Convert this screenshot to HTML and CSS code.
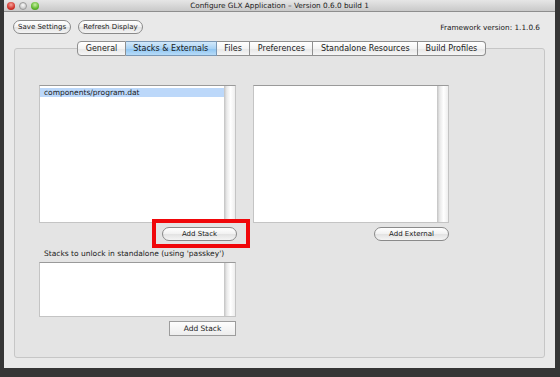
FILE: index.html
```html
<!DOCTYPE html>
<html lang="en">

<head>
  <meta charset="UTF-8">
  <title>Configure GLX Application</title>
  <link rel="stylesheet" href="styles.css">
</head>

<body>
  <div class="window">
    <div class="titlebar">
      <div class="lights">
        <span class="light red"></span>
        <span class="light grey"></span>
        <span class="light green"></span>
      </div>
      <div class="title">Configure GLX Application &ndash; Version 0.6.0 build 1</div>
    </div>

    <div class="toolbar">
      <button class="pill">Save Settings</button>
      <button class="pill">Refresh Display</button>
      <span class="version">Framework version: 1.1.0.6</span>
    </div>

    <div class="tabs">
      <span class="tab first">General</span>
      <span class="tab active">Stacks &amp; Externals</span>
      <span class="tab">Files</span>
      <span class="tab">Preferences</span>
      <span class="tab">Standalone Resources</span>
      <span class="tab last">Build Profiles</span>
    </div>

    <div class="panel">
      <div class="columns">
        <div class="column">
          <div class="list tall">
            <div class="rows">
              <div class="row selected">components/program.dat</div>
            </div>
            <div class="scrollbar"></div>
          </div>
          <div class="actions">
            <button class="pill wide highlighted">Add Stack</button>
          </div>
        </div>
        <div class="column">
          <div class="list tall">
            <div class="rows"></div>
            <div class="scrollbar"></div>
          </div>
          <div class="actions">
            <button class="pill wide">Add External</button>
          </div>
        </div>
      </div>

      <div class="unlock">
        <div class="label">Stacks to unlock in standalone (using 'passkey')</div>
        <div class="list short">
          <div class="rows"></div>
          <div class="scrollbar"></div>
        </div>
        <div class="actions">
          <button class="square">Add Stack</button>
        </div>
      </div>
    </div>
  </div>
</body>

</html>
```

FILE: styles.css
```css
body {
  margin: 0;
  background-color: #363636;
  font-family: "DejaVu Sans", sans-serif;
  font-size: 8px;
  color: #1a1a1a;
}

.window {
  width: 551px;
  height: 368px;
  margin-left: 4px;
  background-color: #e9e9e9;
  display: flex;
  flex-direction: column;
}

.titlebar {
  height: 11px;
  background: linear-gradient(#e6e6e6, #c9c9c9);
  border-bottom: 1px solid #8e8e8e;
  display: flex;
  align-items: center;
  position: relative;
}

.lights {
  display: flex;
  gap: 4px;
  padding-left: 3px;
}

.light {
  width: 8px;
  height: 8px;
  border-radius: 50%;
  box-sizing: border-box;
}

.light.red {
  background: radial-gradient(circle at 50% 35%, #f6a39b, #d0322a 60%, #a31e17);
}

.light.grey {
  background: radial-gradient(circle at 50% 35%, #fafafa, #c9c9c9 70%);
  border: 1px solid #9a9a9a;
}

.light.green {
  background: radial-gradient(circle at 50% 35%, #c9eea4, #5db72b 60%, #3f8a19);
}

.title {
  position: absolute;
  left: 0;
  right: 0;
  text-align: center;
  font-size: 7.3px;
  color: #222;
}

.toolbar {
  display: flex;
  align-items: center;
  gap: 7px;
  padding: 8px 15px 0 9px;
}

.pill {
  height: 14px;
  padding: 0 4px;
  border: 1px solid #8a8a8a;
  border-radius: 7px;
  background: linear-gradient(#ffffff, #f1f1f1 50%, #e2e2e2 51%, #f4f4f4);
  font-family: inherit;
  font-size: 7px;
  color: #1a1a1a;
  line-height: 12px;
}

.version {
  margin-left: auto;
  font-size: 7.3px;
}

.tabs {
  display: flex;
  justify-content: center;
  margin-top: 7px;
  padding-left: 4px;
  position: relative;
  z-index: 1;
}

.tab {
  height: 13px;
  line-height: 14px;
  padding: 0 7.5px;
  border: 1px solid #8f8f8f;
  border-left: none;
  background: linear-gradient(#ffffff, #f3f3f3 50%, #e6e6e6 51%, #f6f6f6);
  font-size: 8px;
}

.tab.first {
  border-left: 1px solid #8f8f8f;
  border-radius: 4px 0 0 4px;
}

.tab.last {
  border-radius: 0 4px 4px 0;
}

.tab.active {
  background: linear-gradient(#d3e9fb, #a9d3f5 50%, #8cc4f1 51%, #b7dbf8);
  border-color: #7b98b5;
}

.panel {
  flex: 1;
  margin: -8px 10px 10px;
  background-color: #e4e4e4;
  border: 1px solid #c6c6c6;
  border-radius: 3px;
  padding: 36px 0 0 24px;
}

.columns {
  display: grid;
  grid-template-columns: 197px 196px;
  gap: 17px;
}

.list {
  display: flex;
  background-color: #ffffff;
  border: 1px solid #c4c4c4;
  border-top-color: #9a9a9a;
}

.list.tall {
  height: 136px;
}

.list.short {
  width: 195px;
  height: 53px;
}

.rows {
  flex: 1;
  padding-top: 2px;
}

.row {
  height: 9px;
  line-height: 9px;
  padding-left: 4px;
  font-size: 7.5px;
}

.row.selected {
  background-color: #bcd8fa;
}

.scrollbar {
  width: 11px;
  background: linear-gradient(90deg, #c2c2c2, #e9e9e9 25%, #ffffff 60%, #eeeeee);
}

.actions {
  display: flex;
  justify-content: flex-end;
  margin-top: 4px;
}

.wide {
  width: 75px;
}

.highlighted {
  position: relative;
  margin-right: -1px;
}

.highlighted::after {
  content: "";
  position: absolute;
  left: -11px;
  right: -14px;
  top: -9px;
  bottom: -8px;
  border: 4px solid #f0070a;
}

.unlock {
  width: 197px;
  margin-top: 8px;
}

.label {
  padding-left: 5px;
  margin-bottom: 4px;
  font-size: 7.5px;
}

.square {
  width: 67px;
  height: 15px;
  border: 1px solid #9c9c9c;
  border-radius: 0;
  background: linear-gradient(#fdfdfd, #ededed);
  font-family: inherit;
  font-size: 7.5px;
  color: #1a1a1a;
}
```
